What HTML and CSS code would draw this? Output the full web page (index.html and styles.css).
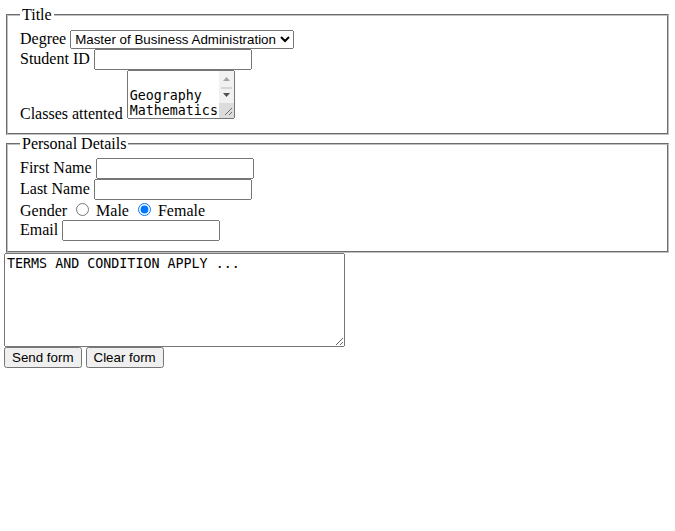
FILE: index.html
```html
<!DOCTYPE html>
<html>
<head>
<meta charset="utf-8">
<title>Form</title>
<link rel="stylesheet" href="styles.css">
</head>
<body>
<form class="form">
<fieldset class="group">
<legend class="group-title">Title</legend>
Degree <select class="degree"><option>Master of Business Administration</option></select><br>
Student ID <input type="text" class="field"><br>
Classes attented <span class="scroll-wrap"><textarea class="classes">

Geography
Mathematics
History</textarea><svg class="fake-bar" width="15" height="47" viewBox="0 0 15 47" aria-hidden="true"><rect x="0" y="0" width="15" height="32" fill="#f1f1f1"/><polygon points="4,10 11,10 7.5,6" fill="#a3a3a3"/><rect x="2" y="16" width="11" height="2" fill="#d6d6d6"/><polygon points="4,22 11,22 7.5,26" fill="#505050"/><rect x="0" y="32" width="15" height="15" fill="#dcdcdc"/><line x1="13" y1="37" x2="6" y2="44" stroke="#6e6e6e" stroke-width="1"/><line x1="13" y1="41" x2="10" y2="44" stroke="#6e6e6e" stroke-width="1"/></svg></span>
</fieldset>
<fieldset class="group">
<legend class="group-title">Personal Details</legend>
First Name <input type="text" class="field"><br>
Last Name <input type="text" class="field"><br>
Gender <input type="radio" name="gender" class="radio"> Male <input type="radio" name="gender" class="radio" checked> Female<br>
Email <input type="text" class="field">
</fieldset>
<textarea class="terms">TERMS AND CONDITION APPLY ...</textarea>
<div class="actions">
<input type="submit" class="btn" value="Send form"> <input type="reset" class="btn" value="Clear form">
</div>
</form>
</body>
</html>
```
FILE: styles.css
```css
body {
  margin: 4px;
  font-family: "Liberation Serif", serif;
  font-size: 16px;
  color: #000;
  background: #fff;
}
.form {
  margin: 0;
  padding-top: 2px;
}
.group {
  margin: 0 2px;
  padding: 0.35em 0.75em 0.625em;
  border: 2px groove #c0c0c0;
}
.group-title {
  padding: 0 2px;
}
.field {
  font-family: "Liberation Sans", Arial, sans-serif;
  font-size: 13.333px;
  box-sizing: border-box;
  width: 158px;
  height: 21px;
}
.degree {
  font-family: "Liberation Sans", Arial, sans-serif;
  font-size: 13.333px;
}
.scroll-wrap {
  position: relative;
  display: inline-block;
}
.classes {
  font-family: "DejaVu Sans Mono", monospace;
  font-size: 13.333px;
  box-sizing: border-box;
  width: 108px;
  height: 49px;
  overflow: hidden;
  padding-right: 12px;
}
.fake-bar {
  position: absolute;
  right: 1px;
  top: 1px;
  pointer-events: none;
}
.terms {
  display: block;
  font-family: "DejaVu Sans Mono", monospace;
  font-size: 13.333px;
  box-sizing: border-box;
  width: 341px;
  height: 94px;
  margin: 0;
}
.actions {
  margin-top: 0;
  line-height: 21px;
}
.btn {
  font-family: "Liberation Sans", Arial, sans-serif;
  font-size: 13.333px;
  margin: 0;
  height: 21px;
  vertical-align: top;
}
.radio {
  margin: 3px 3px 0 5px;
}
```
